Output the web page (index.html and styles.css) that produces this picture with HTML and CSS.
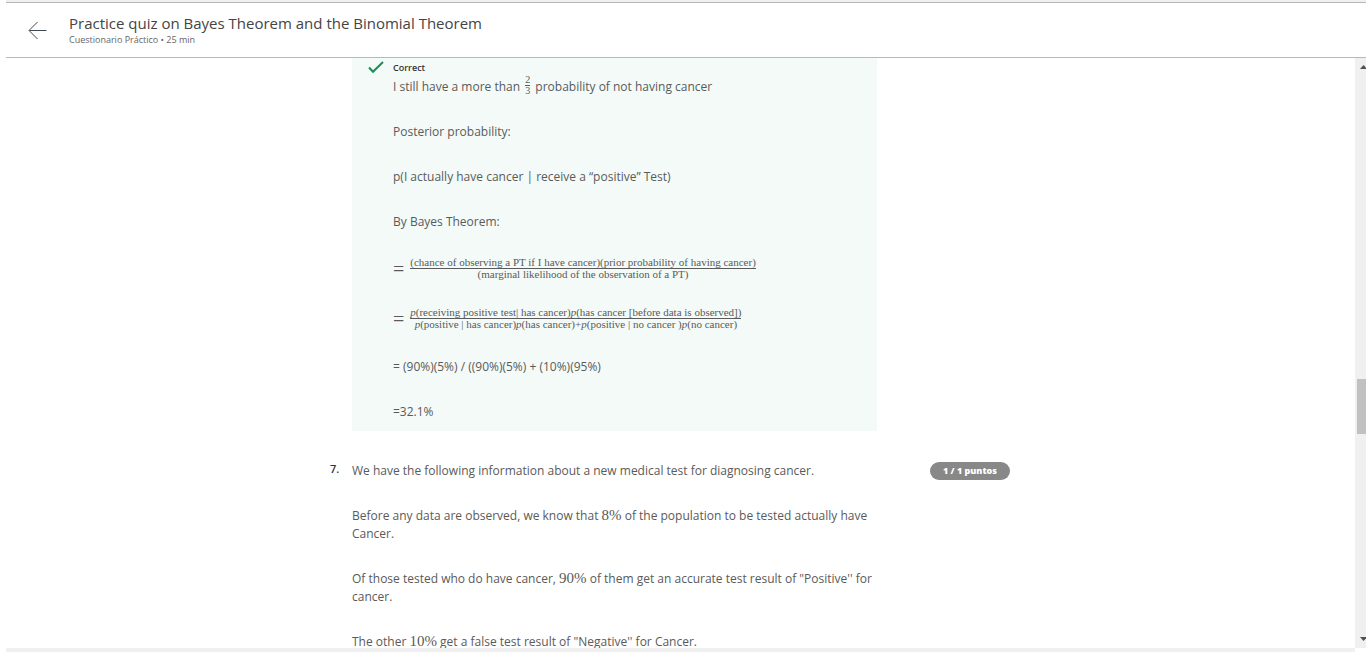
FILE: index.html
```html
<!DOCTYPE html>
<html lang="es">
<head>
<meta charset="utf-8">
<meta name="viewport" content="width=device-width, initial-scale=1">
<title>Practice quiz on Bayes Theorem and the Binomial Theorem</title>
<link rel="stylesheet" href="styles.css">
</head>
<body>
<div class="app">
  <header class="topbar">
    <a class="back" href="#" aria-label="Volver">
      <svg width="19" height="19" viewBox="0 0 19 19" fill="none" stroke="#3f4852" stroke-width="1"><path d="M18.5 9.5H1.5M9.5 1L1 9.5L9.5 18"/></svg>
    </a>
    <div>
      <h1 class="title">Practice quiz on Bayes Theorem and the Binomial Theorem</h1>
      <p class="subtitle">Cuestionario Práctico • 25 min</p>
    </div>
  </header>
  <div class="body">
    <main class="scroller">
      <div class="quiz">
        <section class="feedback">
          <svg class="check" width="16" height="13" viewBox="0 0 16 13" fill="none" stroke="#1d8c55" stroke-width="2"><path d="M1 6.5L5 10.8L15 1"/></svg>
          <div class="feedback-text">
            <h2 class="verdict">Correct</h2>
            <p>I still have a more than <span class="frac small"><span class="num">2</span><span>3</span></span> probability of not having cancer</p>
            <p>Posterior probability:</p>
            <p>p(I actually have cancer | receive a “positive” Test)</p>
            <p>By Bayes Theorem:</p>
            <p class="formula"><span class="equals">=</span><span class="frac"><span class="num">(chance of observing a PT if I have cancer)(prior probability of having cancer)</span><span>(marginal likelihood of the observation of a PT)</span></span></p>
            <p class="formula"><span class="equals">=</span><span class="frac"><span class="num"><i>p</i>(receiving positive test| has cancer)<i>p</i>(has cancer [before data is observed])</span><span><i>p</i>(positive | has cancer)<i>p</i>(has cancer)+<i>p</i>(positive | no cancer )<i>p</i>(no cancer)</span></span></p>
            <p>= (90%)(5%) / ((90%)(5%) + (10%)(95%)</p>
            <p>=32.1%</p>
          </div>
        </section>
        <section class="question">
          <span class="number">7.</span>
          <div class="prompt">
            <p>We have the following information about a new medical test for diagnosing cancer.</p>
            <p>Before any data are observed, we know that <span class="math">8%</span> of the population to be tested actually have Cancer.</p>
            <p>Of those tested who do have cancer, <span class="math">90%</span> of them get an accurate test result of "Positive'' for cancer.</p>
            <p>The other <span class="math">10%</span> get a false test result of "Negative'' for Cancer.</p>
          </div>
          <span class="points">1 / 1 puntos</span>
        </section>
      </div>
    </main>
    <div class="rail" aria-hidden="true">
      <svg width="7" height="4" viewBox="0 0 7 4" fill="#505050"><path d="M0 4L3.5 0L7 4Z"/></svg>
      <div class="track"><div class="thumb"></div></div>
      <svg width="7" height="4" viewBox="0 0 7 4" fill="#505050"><path d="M0 0L3.5 4L7 0Z"/></svg>
    </div>
  </div>
</div>
</body>
</html>
```
FILE: styles.css
```css
* { box-sizing: border-box; }

body {
  margin: 0;
  background: #fff;
  color: #5a5a5a;
  font: 12px/18px "Open Sans", "Noto Sans", sans-serif;
}

h1, h2, p { margin: 0; }

.app {
  display: flex;
  flex-direction: column;
  height: 100vh;
  margin-left: 6px;
  border-top: 2px solid #f0f0f0;
  overflow: hidden;
}

.topbar {
  display: flex;
  flex: none;
  align-items: center;
  gap: 22px;
  padding: 10px 22px 12px;
  border-top: 1px solid #b8b8b8;
  border-bottom: 1px solid #b8b8b8;
}

.back {
  display: flex;
  padding-top: 2px;
}

.title {
  color: #444;
  font-size: 15px;
  font-weight: 400;
  line-height: 20px;
}

.subtitle {
  padding-top: 1px;
  color: #666;
  font-size: 9px;
  line-height: 11px;
}

.body {
  display: flex;
  flex: 1;
  min-height: 0;
}

.scroller {
  flex: 1;
  min-width: 0;
  overflow: hidden;
  border-bottom: 4px solid #f0f0f0;
}

.quiz {
  width: 100%;
  max-width: 701px;
  margin: 0 auto;
}

.feedback {
  display: flex;
  gap: 9px;
  max-width: 525px;
  margin-left: 22px;
  padding: 3px 16px 10px;
  background: #f3faf8;
}

.check { flex: none; }

.feedback-text, .prompt {
  display: flex;
  flex: 1;
  flex-direction: column;
  gap: 27px;
  min-width: 0;
}

.verdict {
  margin-bottom: -27px;
  color: #333;
  font-size: 9px;
  font-weight: 600;
  line-height: 14px;
}

.formula {
  display: flex;
  align-items: center;
  gap: 6px;
  margin: -1px 0 1px;
}

.equals {
  font: 20px/20px "Liberation Serif", serif;
}

.frac {
  display: inline-flex;
  flex-direction: column;
  align-items: center;
  font: 11px/11px "Liberation Serif", serif;
  white-space: nowrap;
}

.small {
  margin: 0 2px;
  font-size: 10px;
  line-height: 10px;
  vertical-align: 8px;
}

.num { border-bottom: 1px solid #5a5a5a; }

.math {
  font: 15px/16px "Liberation Serif", serif;
}

.question {
  display: flex;
  margin-top: 31px;
}

.number {
  flex: none;
  width: 22px;
  color: #333;
  font-size: 11px;
  font-weight: 600;
  line-height: 14px;
}

.prompt { max-width: 525px; }

.points {
  flex: none;
  align-self: flex-start;
  margin-left: 53px;
  padding: 0 13px;
  border-radius: 9px;
  background: #888;
  color: #fff;
  font-size: 9px;
  font-weight: 800;
}

.rail {
  display: flex;
  flex: none;
  flex-direction: column;
  align-items: flex-end;
  width: 11px;
  margin-bottom: 4px;
  padding: 7px 0;
  overflow: hidden;
  background: #f0f0f0;
}

.rail svg { margin-right: -1px; }

.track {
  display: flex;
  flex: 1;
  flex-direction: column;
  justify-content: flex-end;
  width: 9px;
  padding-bottom: 203px;
}

.thumb {
  height: 55px;
  background: #c1c1c1;
}
```
